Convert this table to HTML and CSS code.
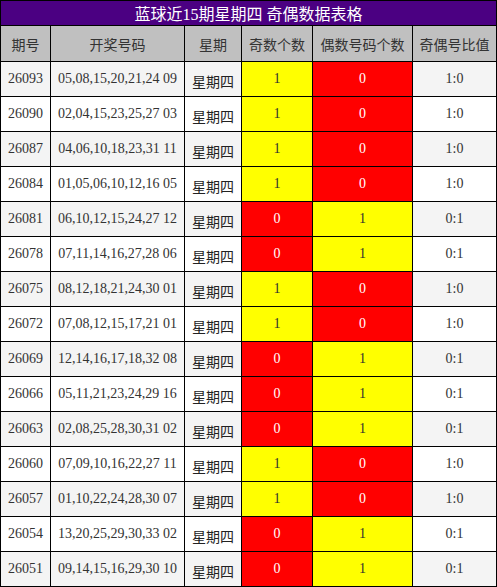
FILE: index.html
```html
<!DOCTYPE html>
<html lang="zh">
<head>
<meta charset="utf-8">
<title>蓝球近15期星期四 奇偶数据表格</title>
<link rel="stylesheet" href="styles.css">
</head>
<body>
<div class="sheet">
  <div class="title">蓝球近15期星期四 奇偶数据表格</div>
  <div class="row head">
    <div class="cell">期号</div><div class="cell">开奖号码</div><div class="cell">星期</div><div class="cell">奇数个数</div><div class="cell">偶数号码个数</div><div class="cell">奇偶号比值</div>
  </div>
  <div class="row alt"><div class="cell">26093</div><div class="cell">05,08,15,20,21,24 09</div><div class="cell cjk">星期四</div><div class="cell yel">1</div><div class="cell red">0</div><div class="cell">1:0</div></div>
  <div class="row"><div class="cell">26090</div><div class="cell">02,04,15,23,25,27 03</div><div class="cell cjk">星期四</div><div class="cell yel">1</div><div class="cell red">0</div><div class="cell">1:0</div></div>
  <div class="row alt"><div class="cell">26087</div><div class="cell">04,06,10,18,23,31 11</div><div class="cell cjk">星期四</div><div class="cell yel">1</div><div class="cell red">0</div><div class="cell">1:0</div></div>
  <div class="row"><div class="cell">26084</div><div class="cell">01,05,06,10,12,16 05</div><div class="cell cjk">星期四</div><div class="cell yel">1</div><div class="cell red">0</div><div class="cell">1:0</div></div>
  <div class="row alt"><div class="cell">26081</div><div class="cell">06,10,12,15,24,27 12</div><div class="cell cjk">星期四</div><div class="cell red">0</div><div class="cell yel">1</div><div class="cell">0:1</div></div>
  <div class="row"><div class="cell">26078</div><div class="cell">07,11,14,16,27,28 06</div><div class="cell cjk">星期四</div><div class="cell red">0</div><div class="cell yel">1</div><div class="cell">0:1</div></div>
  <div class="row alt"><div class="cell">26075</div><div class="cell">08,12,18,21,24,30 01</div><div class="cell cjk">星期四</div><div class="cell yel">1</div><div class="cell red">0</div><div class="cell">1:0</div></div>
  <div class="row"><div class="cell">26072</div><div class="cell">07,08,12,15,17,21 01</div><div class="cell cjk">星期四</div><div class="cell yel">1</div><div class="cell red">0</div><div class="cell">1:0</div></div>
  <div class="row alt"><div class="cell">26069</div><div class="cell">12,14,16,17,18,32 08</div><div class="cell cjk">星期四</div><div class="cell red">0</div><div class="cell yel">1</div><div class="cell">0:1</div></div>
  <div class="row"><div class="cell">26066</div><div class="cell">05,11,21,23,24,29 16</div><div class="cell cjk">星期四</div><div class="cell red">0</div><div class="cell yel">1</div><div class="cell">0:1</div></div>
  <div class="row alt"><div class="cell">26063</div><div class="cell">02,08,25,28,30,31 02</div><div class="cell cjk">星期四</div><div class="cell red">0</div><div class="cell yel">1</div><div class="cell">0:1</div></div>
  <div class="row"><div class="cell">26060</div><div class="cell">07,09,10,16,22,27 11</div><div class="cell cjk">星期四</div><div class="cell yel">1</div><div class="cell red">0</div><div class="cell">1:0</div></div>
  <div class="row alt"><div class="cell">26057</div><div class="cell">01,10,22,24,28,30 07</div><div class="cell cjk">星期四</div><div class="cell yel">1</div><div class="cell red">0</div><div class="cell">1:0</div></div>
  <div class="row"><div class="cell">26054</div><div class="cell">13,20,25,29,30,33 02</div><div class="cell cjk">星期四</div><div class="cell red">0</div><div class="cell yel">1</div><div class="cell">0:1</div></div>
  <div class="row alt"><div class="cell">26051</div><div class="cell">09,14,15,16,29,30 10</div><div class="cell cjk">星期四</div><div class="cell red">0</div><div class="cell yel">1</div><div class="cell">0:1</div></div>
</div>
</body>
</html>
```
FILE: styles.css
```css
html, body {
  margin: 0;
  padding: 0;
  background: #ffffff;
}
.sheet {
  width: 497px;
  box-sizing: border-box;
  background: #000000;
  padding: 1px;
  display: flex;
  flex-direction: column;
  gap: 1px;
  font-family: "Liberation Serif", "Noto Sans CJK SC", serif;
  color: #333333;
}
.title {
  height: 24px;
  background: #4b0082;
  color: #ffffff;
  font-size: 16px;
  display: flex;
  align-items: center;
  justify-content: center;
  white-space: nowrap;
}
.row {
  display: grid;
  grid-template-columns: 49px 133px 56px 70px 99px 83px;
  gap: 1px;
  height: 34px;
}
.row.head {
  height: 35px;
}
.cell {
  background: #ffffff;
  display: flex;
  align-items: center;
  justify-content: center;
  font-size: 14px;
  white-space: nowrap;
}
.row.alt .cell {
  background: #f4f4f4;
}
.row.head .cell {
  background: #c0c0c0;
  font-size: 14px;
  font-family: "Noto Sans CJK SC", sans-serif;
  color: #333333;
}
.cell.cjk {
  font-family: "Noto Sans CJK SC", sans-serif;
  color: #222222;
  padding-top: 3px;
  box-sizing: border-box;
}
.row .cell.yel {
  background: #ffff00;
}
.row .cell.red {
  background: #ff0000;
  color: #ffffff;
}
```
